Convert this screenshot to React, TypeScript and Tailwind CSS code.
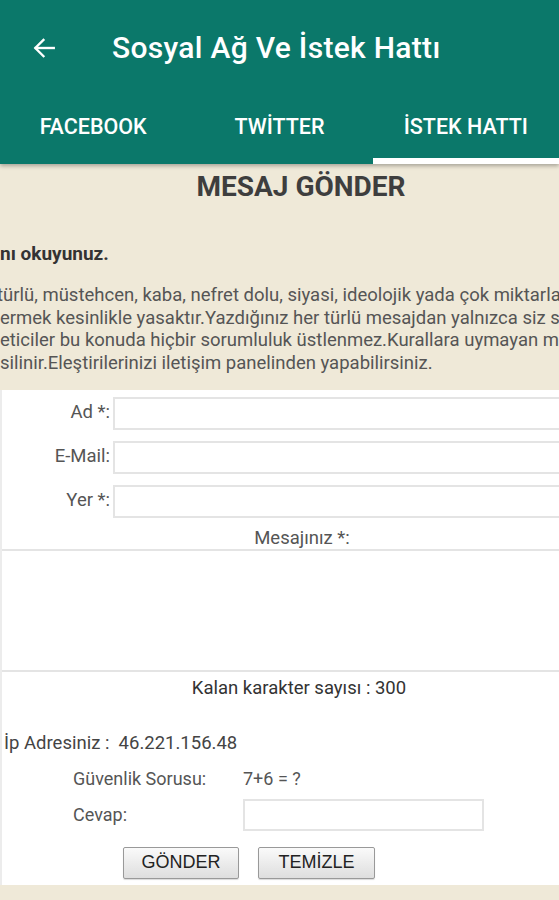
import React from "react";

const tabs = ["FACEBOOK", "TWİTTER", "İSTEK HATTI"];

const rules = [
  "türlü, müstehcen, kaba, nefret dolu, siyasi, ideolojik yada çok miktarla",
  "ermek kesinlikle yasaktır.Yazdığınız her türlü mesajdan yalnızca siz so",
  "eticiler bu konuda hiçbir sorumluluk üstlenmez.Kurallara uymayan m",
  "silinir.Eleştirilerinizi iletişim panelinden yapabilirsiniz.",
];

const fields = ["Ad *:", "E-Mail:", "Yer *:"];

const App = () => {
  return (
    <div className="w-[559px] h-[900px] overflow-hidden bg-[#efe9d8] font-['Roboto',sans-serif]">
      {/* app bar */}
      <div className="bg-[#0b786a] text-white shadow-[0_2px_4px_rgba(0,0,0,0.3)] relative z-10">
        <div className="h-[95px] flex items-center">
          <svg className="ml-[31px] w-[26px] h-[26px]" viewBox="0 0 24 24" fill="none" stroke="white" strokeWidth="2.2" strokeLinecap="square">
            <path d="M21 12H4.5" />
            <path d="M11.5 4.5 4 12l7.5 7.5" />
          </svg>
          <span className="ml-[55px] text-[30px] font-medium tracking-[0.3px]">Sosyal Ağ Ve İstek Hattı</span>
        </div>
        <div className="flex h-[69px]">
          {tabs.map((t, i) => (
            <div key={t} className="flex-1 flex flex-col">
              <div className="flex-1 flex items-center justify-center text-[21.5px] font-medium pt-[1px]">{t}</div>
              <div className={i === 2 ? "h-[6px] bg-white" : "h-[6px]"}></div>
            </div>
          ))}
        </div>
      </div>

      {/* webview content */}
      <div className="overflow-hidden">
        <div className="w-[602px] text-center pt-[7px] text-[28px] leading-[32px] font-bold text-[#3e3e3e]">MESAJ GÖNDER</div>
        <div className="mt-[39px] text-[19px] leading-[24px] font-bold text-[#333] whitespace-nowrap">nı okuyunuz.</div>
        <div className="mt-[18px] pb-[15px] -ml-[3px] text-[18.5px] leading-[22.7px] text-[#555] whitespace-nowrap">
          {rules.map((r, i) => (
            <div key={r} className={i === 0 ? "" : "ml-[3px]"}>{r}</div>
          ))}
        </div>

        {/* form */}
        <div className="bg-white pt-[7px] pb-[6px] border-l-2 border-[#ececec]">
          <div className="flex flex-col gap-[11px]">
            {fields.map((f) => (
              <div key={f} className="flex items-center">
                <div className="w-[111px] shrink-0 pr-[3px] text-right text-[18.5px] text-[#555]">{f}</div>
                <div className="w-[500px] h-[33px] border-2 border-[#e4e4e4] bg-white shrink-0"></div>
              </div>
            ))}
          </div>
          <div className="w-[600px] text-center mt-[10px] text-[18.5px] leading-[21px] text-[#555]">Mesajınız *:</div>
          <div className="h-[123px] border-y-2 border-[#e4e4e4]"></div>
          <div className="w-[594px] text-center mt-[5px] text-[18.5px] leading-[22px] text-[#333]">Kalan karakter sayısı : 300</div>
          <div className="mt-[33px] pl-[2px] text-[18.5px] leading-[22px] text-[#444] whitespace-nowrap">
            İp Adresiniz :&nbsp; 46.221.156.48
          </div>
          <div className="mt-[14px] pl-[71px] flex items-center text-[18px] leading-[22px] text-[#555]">
            <span className="w-[170px] shrink-0">Güvenlik Sorusu:</span>
            <span>7+6 = ?</span>
          </div>
          <div className="mt-[9px] pl-[71px] flex items-center text-[18px] text-[#555]">
            <span className="w-[170px] shrink-0">Cevap:</span>
            <div className="w-[241px] h-[32px] border-2 border-[#e4e4e4]"></div>
          </div>
          <div className="mt-[16px] pl-[121px] flex gap-[19px] font-['Liberation_Sans',Arial,sans-serif]">
            <button className="w-[116px] h-[32px] border border-[#999] rounded-[2px] bg-gradient-to-b from-[#fafafa] to-[#dedede] text-[18px] text-[#222] shadow-[0_1px_1px_rgba(0,0,0,0.15)]">
              GÖNDER
            </button>
            <button className="w-[117px] h-[32px] border border-[#999] rounded-[2px] bg-gradient-to-b from-[#fafafa] to-[#dedede] text-[18px] text-[#222] shadow-[0_1px_1px_rgba(0,0,0,0.15)]">
              TEMİZLE
            </button>
          </div>
        </div>
      </div>
    </div>
  );
};

export default App;
